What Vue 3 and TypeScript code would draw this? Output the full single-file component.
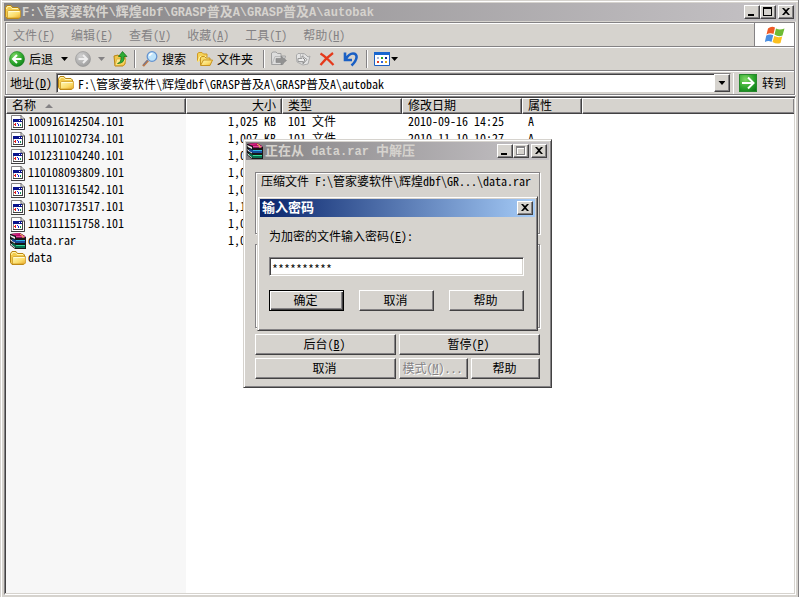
<script setup lang="ts">
import { ref } from 'vue'

interface Entry {
  icon: string
  name: string
  size: string
  type?: string
  date?: string
  attr?: string
}

const path = ref('F:\\管家婆软件\\辉煌dbf\\GRASP普及A\\GRASP普及A\\autobak')
const password = ref('**********')

const menus = [
  { text: '文件', key: 'F' },
  { text: '编辑', key: 'E' },
  { text: '查看', key: 'V' },
  { text: '收藏', key: 'A' },
  { text: '工具', key: 'T' },
  { text: '帮助', key: 'H' },
]

const entries: Entry[] = [
  { icon: 'file', name: '100916142504.101', size: '1,025 KB', type: '101 文件', date: '2010-09-16 14:25', attr: 'A' },
  { icon: 'file', name: '101110102734.101', size: '1,007 KB', type: '101 文件', date: '2010-11-10 10:27', attr: 'A' },
  { icon: 'file', name: '101231104240.101', size: '1,0' },
  { icon: 'file', name: '110108093809.101', size: '1,0' },
  { icon: 'file', name: '110113161542.101', size: '1,0' },
  { icon: 'file', name: '110307173517.101', size: '1,1' },
  { icon: 'file', name: '110311151758.101', size: '1,0' },
  { icon: 'rar', name: 'data.rar', size: '1,0' },
  { icon: 'folder', name: 'data', size: '' },
]

// Bold captions mix wide ideographs with narrower Latin runs.
const runs = (text: string) =>
  text.split(/([\u4e00-\u9fff]+)/).filter(Boolean).map((t) => ({ t, wide: /[\u4e00-\u9fff]/.test(t) }))
</script>

<template>
  <svg class="sprites" aria-hidden="true">
    <defs>
      <linearGradient id="gold" x1="0" y1="0" x2="1" y2="1">
        <stop offset="0" stop-color="#fff9b8" /><stop offset=".6" stop-color="#fbdc6a" /><stop offset="1" stop-color="#e9a92a" />
      </linearGradient>
      <radialGradient id="green" cx=".35" cy=".3" r=".8">
        <stop offset="0" stop-color="#7fd865" /><stop offset=".6" stop-color="#2ca52c" /><stop offset="1" stop-color="#0d7a18" />
      </radialGradient>
      <radialGradient id="grey" cx=".35" cy=".3" r=".8">
        <stop offset="0" stop-color="#d0d0d0" /><stop offset="1" stop-color="#9a9a9a" />
      </radialGradient>
      <symbol id="folder" viewBox="0 0 16 16">
        <path d="M.5 12.500V3.500L2 1.500h4L7.500 3.500H13L14.500 5v8L13.500 14.500H2z" fill="#f3cb4c" stroke="#b98412" />
        <path d="M1.500 5L2.500 2.500h3L7 4.500h6" fill="none" stroke="#fff6b4" />
        <path d="M3.500 6.500h12v6.500l-1 1H2.500V7.500z" fill="url(#gold)" stroke="#c8931f" stroke-width=".7" />
        <path d="M4 7.500h10.500" stroke="#fffbd6" />
      </symbol>
      <symbol id="file" viewBox="0 0 14 15">
        <path d="M.5.5H10L13.500 4v10.500H.5z" fill="#fff" stroke="#848284" />
        <path d="M10 0v4h4" fill="none" stroke="#636163" />
        <path d="M13.500 4v10.500H0" fill="none" stroke="#424142" />
        <path d="M2 4h10v9H2z" fill="#424142" />
        <path d="M2 4h9v8H2z" fill="#848284" />
        <path d="M3 7h8v5H3z" fill="#fff" />
        <path d="M2 4h9v3H2z" fill="#0a148c" />
        <path d="M8 5h1v1H8zM10 5h1v1h-1z" fill="#fff" />
        <path d="M3 9h2v1H3zM4 8h1v3H4z" fill="#e21b1b" />
        <path d="M6 8h1v1H6zM7 9h1v2H7z" fill="#1c28d8" />
        <path d="M9 9h1v2H9z" fill="#17965b" />
      </symbol>
      <symbol id="rar" viewBox="0 0 16 16">
        <path d="M0 1l10-1 6 4v12H5L0 12z" fill="#171717" />
        <path d="M1 1l9-1 5 3H6z" fill="#b50b66" /><path d="M2 1l7-.5 1 .5-6 .8z" fill="#f13a9b" /><path d="M6 3h9v2H6z" fill="#8b1256" />
        <path d="M6 3.500h9" stroke="#dd4d9c" />
        <path d="M0 2l5 2v2L1 4zM0 6l5 3v1.500L1 8zM0 10l5 3.500V15l-4-3z" fill="#eee" />
        <path d="M2 6l4 1h9v3H6L2 8z" fill="#174d9c" /><path d="M6 7.500h9" stroke="#31b7e8" />
        <path d="M2 10l4 2h9v3H6l-4-3z" fill="#087052" /><path d="M6 12.500h9" stroke="#38dd9c" />
        <path d="M10 1l3 2v2" stroke="#f0d54f" fill="none" />
      </symbol>
    </defs>
  </svg>

  <main class="window">
    <header class="titlebar inactive">
      <svg class="i16"><use href="#folder" /></svg>
      <h1 class="caption"><span v-for="(r, i) in runs(path)" :key="i" :class="{ wide: r.wide }">{{ r.t }}</span></h1>
      <div class="sysbuttons">
        <button class="sys" aria-label="最小化"><svg viewBox="0 0 12 10"><path d="M2 7h6v2H2z" /></svg></button>
        <button class="sys" aria-label="最大化"><svg viewBox="0 0 12 10"><path fill-rule="evenodd" d="M1 0h9v9H1zM2 2v6h7V2z" /></svg></button>
        <button class="sys close" aria-label="关闭"><svg viewBox="0 0 12 10"><path d="M2 1h2l2 2 2-2h2L7 4.500 10 8H8L6 6 4 8H2l3-3.500z" /></svg></button>
      </div>
    </header>

    <div class="bars">
      <nav class="menubar">
        <div class="menus">
          <button v-for="m in menus" :key="m.key" class="menu">{{ m.text }}(<u>{{ m.key }}</u>)</button>
        </div>
        <div class="brand">
          <svg viewBox="0 0 20 18">
            <path d="M3 2.500Q6.500-.5 10 1.500L8.500 8Q5 6.500 1.500 8.500z" fill="#ee5a26" />
            <path d="M11 2.500q3.500 2 8.500 0L17.500 9.500q-4 2-8-1z" fill="#6dbb35" />
            <path d="M1.300 9.500Q5 7.500 8.200 9.200L6.500 16Q3.500 14-.2 16z" fill="#4a8fe2" />
            <path d="M9.300 10Q13 12 17.200 10.500L15.500 17q-4 1.500-8-1z" fill="#fbc01f" />
          </svg>
        </div>
      </nav>

      <div class="toolbar">
        <button class="tool back"><svg class="i16" viewBox="0 0 16 16"><circle cx="8" cy="8" r="7.500" fill="url(#green)" stroke="#17801c" stroke-width=".6" /><path d="M12.500 8H4.500M8 4L4 8l4 4" fill="none" stroke="#fff" stroke-width="2" /></svg>后退<i class="drop"></i></button>
        <button class="tool forward" aria-label="前进"><svg class="i16" viewBox="0 0 16 16"><circle cx="8" cy="8" r="7.500" fill="url(#grey)" stroke="#929292" stroke-width=".6" /><path d="M3.500 8h8M8 4l4 4-4 4" fill="none" stroke="#eee" stroke-width="2" /></svg><i class="drop dim"></i></button>
        <button class="tool up" aria-label="向上"><svg class="i16" viewBox="0 0 16 16"><path d="M2 5l4-1 1 1h4l2 1v7l-2 2H3z" fill="#f1c74a" stroke="#b98412" /><path d="M3 14.500L5 8h9l-2 6.500z" fill="url(#gold)" stroke="#c8931f" stroke-width=".5" /><path d="M5.500 12.500q4-1 3.500-7H6.500L10.500.5l4.500 5H12q1 7-6.500 7z" fill="#2fac35" stroke="#126e1a" stroke-width=".7" /></svg></button>
        <span class="sep"></span>
        <button class="tool search"><svg class="i16" viewBox="0 0 16 16"><path d="M1 15l5-5.500" stroke="#b8774a" stroke-width="2.500" /><path d="M1.500 13.500l4-4.500" stroke="#5476b0" /><circle cx="10" cy="5.500" r="4.800" fill="#bfe4fb" stroke="#6593ce" stroke-width="1.300" /><path d="M7.500 5q.5-2.500 3-2.500" fill="none" stroke="#fff" stroke-width="1.500" /></svg>搜索</button>
        <button class="tool folders"><svg class="i16" viewBox="0 0 16 16"><path d="M.5 11V2.500L2 1.500h3L6.500 3H10v3" fill="#f5d257" stroke="#d19a24" /><path d="M.5 11L3 5.500h6" fill="none" stroke="#fff3a0" /><path d="M3.500 14V6.500L5 5.500h2.500L9 7h4v2" fill="#f9dc6c" stroke="#c8931f" /><path d="M3.500 14.500L6.500 9h9L13 14.500z" fill="url(#gold)" stroke="#c8931f" /></svg>文件夹</button>
        <span class="sep"></span>
        <button class="tool" disabled aria-label="移至"><svg class="i16" viewBox="0 0 16 16"><path d="M.5 13.500V2L2 1h3l1.500 1.500H10V5h4.500L12 13.500z" fill="#ddd" stroke="#a0a0a0" /><path d="M1 13L4 5.500h10" fill="none" stroke="#bbb" /><path d="M5 7.500h5V5l5.500 4.500L10 14v-2.500H5z" fill="#929292" stroke="#858585" stroke-width=".6" /></svg></button>
        <button class="tool" disabled aria-label="复制到"><svg class="i16" viewBox="0 0 16 16"><path d="M1.500 7V4L3 2.500h6L11 4l2 2 2-1-2 8-5 1-6-3z" fill="#e4e4e4" stroke="#aaa" /><path d="M5.500 2.500V7M8 3v4M3 11h4" stroke="#bbb" /><path d="M3 7.500h4V5l5 3.500L8 13v-2.500H3z" fill="#eee" stroke="#999" /><path d="M8 7l2 2-2 3" fill="none" stroke="#888" /></svg></button>
        <button class="tool" aria-label="删除"><svg class="i16" viewBox="0 0 16 16"><path d="M1.500 2.500Q7 6 14.500 14M14 2Q7 7 1.500 14" fill="none" stroke="#e5391b" stroke-width="2.200" /></svg></button>
        <button class="tool undo" aria-label="撤消"><svg class="i16" viewBox="0 0 16 16"><path d="M2 1.500V9h7M2.500 8.500Q6 2.500 10 2.500c5 0 5 6-1.500 12" fill="none" stroke="#1a5fc4" stroke-width="2.600" /></svg></button>
        <span class="sep"></span>
        <button class="tool views" aria-label="查看方式"><svg class="i16" viewBox="0 0 16 16"><path d="M.5 1.500h15v13H.5z" fill="#fff" stroke="#1c5fc2" /><path d="M0 1h16v3H0z" fill="#1766cf" /><path d="M3 6h2v2H3z" fill="#a9b7d8" /><path d="M7 6h2v2H7z" fill="#28a428" /><path d="M11 6h2v2h-2z" fill="#102c91" /><path d="M3 10h2v2H3z" fill="#e04228" /><path d="M7 10h2v2H7z" fill="#3266dc" /><path d="M11 10h2v2h-2z" fill="#e2a91a" /></svg><i class="drop"></i></button>
      </div>

      <form class="address" @submit.prevent>
        <label for="addr">地址(<u>D</u>)</label>
        <div class="combo">
          <svg class="i16"><use href="#folder" /></svg>
          <input id="addr" v-model="path" type="text" />
          <button type="button" class="combo-drop" aria-label="展开"><i class="drop"></i></button>
        </div>
        <button class="go"><svg viewBox="0 0 18 18"><path d="M0 0h18v18H0z" fill="url(#green)" /><path d="M.5.500h17v17H.5z" fill="none" stroke="#27882c" /><path d="M3 9h11M9 3.500L14.500 9 9 14.500" fill="none" stroke="#fff" stroke-width="2" /></svg>转到</button>
      </form>
    </div>

    <section class="list">
      <table>
        <colgroup><col class="c-name" /><col class="c-size" /><col class="c-wide" /><col class="c-wide" /><col class="c-attr" /><col /></colgroup>
        <thead>
          <tr><th>名称<i class="sort"></i></th><th class="num">大小</th><th>类型</th><th>修改日期</th><th>属性</th><th class="rest"></th></tr>
        </thead>
        <tbody>
          <tr v-for="e in entries" :key="e.name">
            <td class="name"><div><svg :class="e.icon"><use :href="'#' + e.icon" /></svg>{{ e.name }}</div></td>
            <td :class="e.size.length > 3 ? 'num' : 'cut'">{{ e.size }}</td>
            <td>{{ e.type }}</td><td>{{ e.date }}</td><td>{{ e.attr }}</td><td></td>
          </tr>
        </tbody>
      </table>
    </section>

    <section class="dialog extract">
      <header class="titlebar inactive">
        <svg class="i16"><use href="#rar" /></svg>
        <h2 class="caption"><span v-for="(r, i) in runs('正在从 data.rar 中解压')" :key="i" :class="{ wide: r.wide }">{{ r.t }}</span></h2>
        <div class="sysbuttons">
          <button class="sys" aria-label="最小化"><svg viewBox="0 0 12 10"><path d="M2 7h6v2H2z" /></svg></button>
          <button class="sys" disabled aria-label="最大化"><svg viewBox="0 0 12 10"><path fill="#fff" fill-rule="evenodd" d="M2 1h9v9H2zM3 3v6h7V3z" /><path fill="#848284" fill-rule="evenodd" d="M1 0h9v9H1zM2 2v6h7V2z" /></svg></button>
          <button class="sys close" aria-label="关闭"><svg viewBox="0 0 12 10"><path d="M2 1h2l2 2 2-2h2L7 4.500 10 8H8L6 6 4 8H2l3-3.500z" /></svg></button>
        </div>
      </header>
      <div class="extract-body">
        <div class="group first">压缩文件 F:\管家婆软件\辉煌dbf\GR...\data.rar</div>
        <div class="group second"></div>
        <div class="actions">
          <button class="push half">后台(<u>B</u>)</button>
          <button class="push half">暂停(<u>P</u>)</button>
          <button class="push half">取消</button>
          <button class="push" disabled>模式(<u>M</u>)...</button>
          <button class="push">帮助</button>
        </div>
      </div>
    </section>

    <section class="dialog ask">
      <header class="titlebar active">
        <h2 class="caption"><span class="wide">输入密码</span></h2>
        <button class="sys" aria-label="关闭"><svg viewBox="0 0 12 10"><path d="M2 1h2l2 2 2-2h2L7 4.500 10 8H8L6 6 4 8H2l3-3.500z" /></svg></button>
      </header>
      <form class="ask-body" @submit.prevent>
        <label for="pw">为加密的文件输入密码(<u>E</u>):</label>
        <input id="pw" v-model="password" type="text" autocomplete="off" />
        <div class="choices">
          <button class="push default">确定</button>
          <button type="button" class="push">取消</button>
          <button type="button" class="push">帮助</button>
        </div>
      </form>
    </section>
  </main>
</template>

<style>
body {
  background: #d6d3ce;
}
</style>

<style scoped>
* {
  box-sizing: border-box;
}
.sprites {
  position: absolute;
  width: 0;
  height: 0;
}
.window,
button,
input {
  font: 12px/14px "Noto Sans Mono CJK SC", "Noto Sans CJK SC", monospace;
  color: #000;
}
.window {
  position: relative;
  display: flex;
  flex-direction: column;
  height: 100vh;
  padding: 1px 2px 2px 2px;
  background: #d6d3ce;
  border-left: 1px solid #d6d3ce;
  border-right: 1px solid #848284;
  box-shadow: inset 1px 0 #fff, inset 0 1px #d6d3ce, inset 0 2px #fff;
  overflow: hidden;
  white-space: pre;
}
button {
  padding: 0;
  margin: 0;
  border: 0;
  background: none;
  white-space: pre;
}
svg {
  display: block;
  flex: none;
}
.i16 {
  width: 16px;
  height: 16px;
}
u {
  text-underline-offset: 1px;
}

/* captions */
.titlebar {
  display: flex;
  align-items: center;
  flex: none;
  height: 18px;
  padding: 0 2px 0 1px;
}
.window > .titlebar {
  margin: 2px 0 1px 1px;
}
.inactive {
  background: linear-gradient(90deg, #848284, #c6c3c6);
  color: #d6d3ce;
}
.active {
  background: linear-gradient(90deg, #08246b, #a5cbf7);
  color: #fff;
}
.caption {
  flex: 1;
  margin: 0 0 0 1px;
  font: bold 12px/14px "Liberation Mono", monospace;
}
.caption .wide {
  font: bold 13px/14px "Noto Sans CJK SC", sans-serif;
}
.sysbuttons {
  display: flex;
}
.sys {
  display: grid;
  place-items: center;
  width: 16px;
  height: 14px;
  background: #d6d3ce;
  border: 1px solid;
  border-color: #fff #424142 #424142 #fff;
  box-shadow: inset -1px -1px #848284;
}
.sys svg {
  width: 12px;
  height: 10px;
}
.close {
  margin-left: 2px;
}

/* bars */
.bars {
  flex: none;
  margin: 0 1px 1px 2px;
  border: 1px solid #848284;
  box-shadow: 0 1px #fff, 1px 0 #fff;
}
.menubar {
  display: flex;
  height: 24px;
  border-bottom: 1px solid #848284;
}
.menus {
  display: flex;
  align-items: center;
  gap: 16px;
  flex: 1;
  padding-left: 6px;
  border: 1px solid #fff;
  border-width: 1px 0 0 1px;
}
.menu {
  color: #848284;
}
.brand {
  display: grid;
  place-items: center;
  width: 40px;
  background: #fff;
  border-left: 1px solid #848284;
}
.brand svg {
  width: 20px;
  height: 18px;
}
.toolbar {
  display: flex;
  align-items: center;
  height: 24px;
  padding-left: 2px;
  border-top: 1px solid #fff;
  border-left: 1px solid #fff;
  border-bottom: 1px solid #848284;
}
.tool {
  display: flex;
  align-items: center;
  gap: 4px;
  margin-right: 8px;
}
.drop {
  width: 7px;
  height: 4px;
  background: #000;
  clip-path: polygon(0 0, 100% 0, 50% 100%);
}
.dim {
  background: #848284;
}
.back {
  margin-right: 7px;
}
.back .drop {
  margin-left: 4px;
}
.forward {
  gap: 7px;
  margin-right: 7px;
}
.up {
  margin-right: 6px;
}
.sep {
  width: 2px;
  height: 18px;
  margin-right: 6px;
  border-left: 1px solid #848284;
  border-right: 1px solid #fff;
}
.search {
  margin-right: 11px;
}
.folders {
  margin-right: 10px;
}
.undo {
  margin-right: 7px;
}
.views {
  gap: 1px;
}
.address {
  display: flex;
  align-items: center;
  height: 23px;
  padding: 1px 8px 1px 3px;
  border-top: 1px solid #fff;
  border-left: 1px solid #fff;
}
.combo {
  display: flex;
  align-items: center;
  flex: 1;
  height: 20px;
  margin: 0 2px 0 4px;
  padding-left: 1px;
  background: #fff;
  border: 1px solid;
  border-color: #848284 #d6d3ce #d6d3ce #848284;
  box-shadow: inset 1px 1px #424142;
}
.combo input {
  flex: 1;
  min-width: 0;
  height: 16px;
  padding: 0;
  margin-left: 4px;
  border: 0;
  outline: 0;
  background: none;
}
.combo-drop {
  display: grid;
  place-items: center;
  width: 16px;
  height: 18px;
  background: #d6d3ce;
  border: 1px solid;
  border-color: #fff #424142 #424142 #fff;
  box-shadow: inset -1px -1px #848284;
}
.go {
  display: flex;
  align-items: center;
  gap: 5px;
  height: 21px;
  padding-left: 5px;
  border-left: 1px solid #fff;
}
.go svg {
  width: 18px;
  height: 18px;
}

/* file list */
.list {
  flex: 1;
  min-height: 0;
  margin-left: 1px;
  padding: 1px;
  border: 1px solid;
  border-color: #848284 #fff #fff #848284;
  background: linear-gradient(90deg, #424142 1px, #f7f7f7 1px, #f7f7f7 181px, #fff 181px);
  box-shadow: inset 0 1px #424142, inset -1px -1px #d6d3ce;
}
table {
  width: 100%;
  table-layout: fixed;
  border-collapse: separate;
  border-spacing: 0;
}
.c-name {
  width: 180px;
}
.c-size {
  width: 96px;
}
.c-wide {
  width: 120px;
}
.c-attr {
  width: 60px;
}
th {
  height: 16px;
  padding: 0 0 0 5px;
  font-weight: normal;
  line-height: 11px;
  text-align: left;
  vertical-align: top;
  background: #d6d3ce;
  border: 1px solid;
  border-color: #fff #424142 #424142 #fff;
  box-shadow: inset -1px -1px #848284;
}
th.num {
  padding-right: 5px;
}
th.rest {
  border-right: 0;
}
.sort {
  display: inline-block;
  width: 8px;
  height: 4px;
  margin: 0 0 2px 9px;
  background: #848284;
  clip-path: polygon(50% 0, 100% 100%, 0 100%);
}
td {
  height: 17px;
  padding: 0 0 0 6px;
  line-height: 14px;
  vertical-align: top;
}
.num {
  padding-right: 6px;
  text-align: right;
}
td.cut {
  padding-left: 42px;
}
.name {
  padding-left: 4px;
}
.name div {
  display: flex;
  gap: 2px;
}
.name svg {
  width: 16px;
  height: 16px;
}
.name .file {
  width: 14px;
  height: 15px;
  margin: 1px 1px 0;
}

/* dialogs */
.dialog {
  position: absolute;
  background: #d6d3ce;
  border: 1px solid;
  border-color: #d6d3ce #424142 #424142 #d6d3ce;
  box-shadow: inset 1px 1px #fff, inset -1px -1px #848284;
}
.extract {
  left: 242px;
  top: 139px;
  width: 309px;
  padding: 2px;
}
.extract .caption {
  margin-left: 2px;
}
.extract-body {
  padding: 12px 9px 6px;
}
.group {
  border: 1px solid #848284;
  box-shadow: inset 1px 1px #fff, 1px 1px #fff;
}
.first {
  height: 62px;
  padding: 1px 5px;
}
.second {
  height: 84px;
  margin-top: 10px;
}
.actions {
  display: grid;
  grid-template-columns: 141px 69px 69px;
  gap: 3px;
  margin-top: 6px;
}
.half:nth-child(2) {
  grid-column: span 2;
}
.push {
  height: 21px;
  padding: 0 2px 2px 0;
  background: #d6d3ce;
  border: 1px solid;
  border-color: #fff #424142 #424142 #fff;
  box-shadow: inset -1px -1px #848284;
}
.push:disabled {
  color: #848284;
  text-shadow: 1px 1px #fff;
}
.ask {
  left: 256px;
  top: 196px;
  width: 281px;
  padding: 2px;
}
.ask-body {
  display: flex;
  flex-direction: column;
  padding: 12px 11px 17px 9px;
}
#pw {
  height: 19px;
  margin: 14px 0;
  padding: 4px 2px 0;
  outline: 0;
  background: #fff;
  border: 1px solid;
  border-color: #848284 #fff #fff #848284;
  box-shadow: inset 1px 1px #424142, inset -1px -1px #d6d3ce;
}
.choices {
  display: grid;
  grid-template-columns: repeat(3, 1fr);
  gap: 15px;
}
.default {
  border-color: #000;
  box-shadow: inset 1px 1px #fff, inset -1px -1px #424142, inset -2px -2px #848284;
}
</style>
